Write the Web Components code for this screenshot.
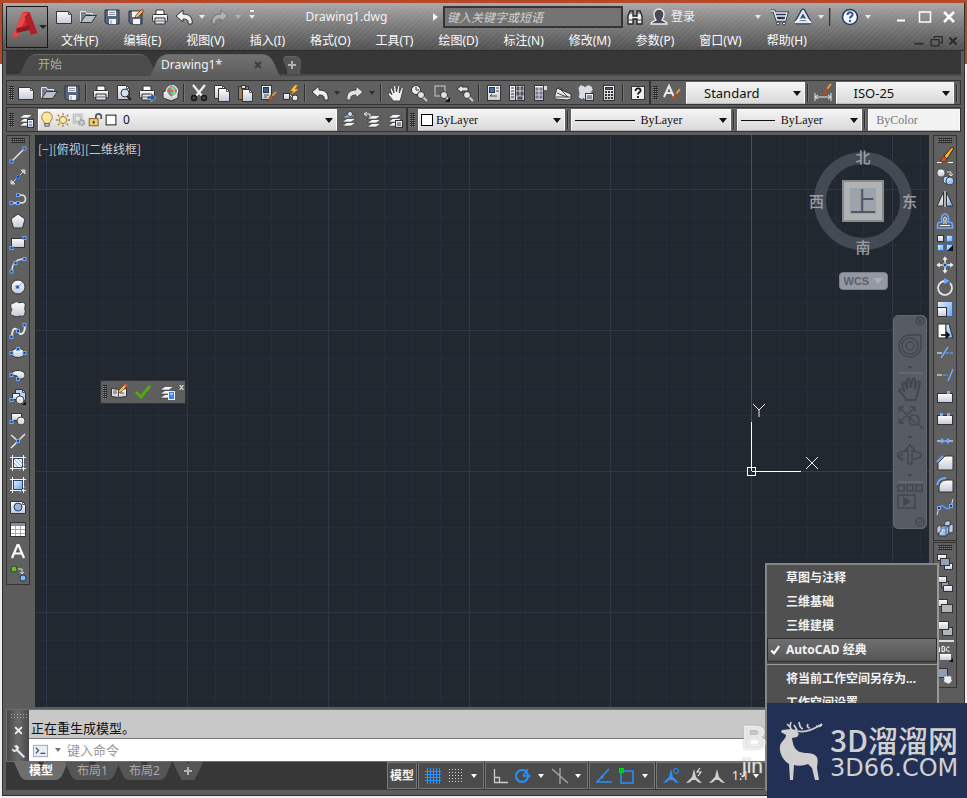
<!DOCTYPE html>
<html lang="zh-CN">
<head>
<meta charset="utf-8">
<title>Drawing1.dwg</title>
<style>
html,body{margin:0;min-height:100%}
body{background:linear-gradient(#b5482b 0 64px,#eceeee 64px);font:12px/16px "Noto Sans","Noto Sans CJK SC",sans-serif;color:#f2f2f2}
</style>
</head>
<body>
<cad-app></cad-app>
<script>
const sq=(x,y,c='#6fa8ff')=>`<rect x="${x-1.5}" y="${y-1.5}" width="3" height="3" fill="#29456f" stroke="${c}"/>`;
const page=(x,y,w,h,f='url(#g)')=>`<path d="M${x} ${y}h${w-3}l3 3v${h-3}h-${w}z" fill="${f}" stroke="#343434"/><path d="M${x+w-3} ${y}v3h3" fill="none" stroke="#555"/>`;
const box=(x,y,w,h,f='url(#g)',s='#333')=>`<rect x="${x}" y="${y}" width="${w}" height="${h}" fill="${f}" stroke="${s}"/>`;
const line=(d,c='#e4e6ea',w=1.5)=>`<path d="${d}" fill="none" stroke="${c}" stroke-width="${w}"/>`;
const sheet=(y,f='#f4f5f8')=>`<path d="M2 ${y+3}l5-3.500h9l-5 3.500z" fill="${f}" stroke="#333" stroke-width=".6"/>`;
const stack=sheet(12)+sheet(8)+sheet(4);
const brush=`<path d="M16 1l-6 6 2 2 5-7z" fill="#f2a532" stroke="#3a2a1a" stroke-width=".7"/><path d="M10 7l2 2-2 3-4 1 1-3z" fill="#a85a28" stroke="#3a2418" stroke-width=".7"/>`;
const pencil=`<path d="M8 10l1-3 6-6 2 2-6 6z" fill="#ffb54a" stroke="#55331a" stroke-width=".7"/><path d="M14 2l2 2 1.500-1.500-2-2z" fill="#e2553a"/>`;
const printer=`<path d="M5 7V2h7l1 1v4" fill="#fff" stroke="#333"/><rect x="1.500" y="6.500" width="15" height="7" rx="1" fill="url(#g)" stroke="#333"/><path d="M4 10h10v6H4z" fill="#dfe3ea" stroke="#333"/><path d="M5 13h8" stroke="#596170"/>`;
const mag=`<circle cx="11" cy="11" r="3.500" fill="#dfe4ec" stroke="#333"/><path d="M13.500 13.500l3.500 3.500" stroke="#c7ccd4" stroke-width="2"/>`;
const person=`<path d="M1 16c0-3 4-3 5-4-2-2-2-3-2-6a5 5 0 0 1 10 0c0 3 0 4-2 6 1 1 5 1 5 4z" fill="#4a4a55" stroke="#eee" stroke-width="1.300"/>`;
const ann=(c)=>`<path d="M9 2l2 8 6 6c-3 0-5-1-6-3h-4c-1 2-3 3-6 3l6-6z" fill="${c}"/>`;
const hand=`<path d="M6 17c-1-3-4-5-5-7 1-2 3-1 4 1L3 5c0-1.500 2-1.500 2.300 0L7 9 6.500 2.500c0-1.500 2-1.500 2.200 0L9.500 8l1.200-6c.3-1.300 2-1 2 .5L12.300 9l2-5c.5-1.200 2.200-.6 1.900.8L14 14l-1 3z"`;
const ICONS={
new:page(1.5,3.5,15,12),
open:`<path d="M1.500 14.500v-11h5l1 2h6v3" fill="#7a828f" stroke="#e4e7ec"/><path d="M1.500 14.500l5-7h11l-5 7z" fill="#b9c0cb" stroke="#333"/>`,
save:`<path d="M2 2h14v14H4l-2-2z" fill="#59667c" stroke="#2b3038"/><path d="M5 2.500h8V8H5zM6 11h7v5H6z" fill="#f2f4f7"/><path d="M6 4.500h6M6 6.500h6M8 12v4" stroke="#8791a1"/>`,
saveas:`<path d="M2 3h13v13H4l-2-2z" fill="#59667c" stroke="#2b3038"/><path d="M5 3.500h7V9H5zM6 11h7v5H6z" fill="#f2f4f7"/>`+pencil,
print:printer,
preview:page(2.5,1.5,12,14)+`<circle cx="10" cy="9" r="4" fill="#cfe0f2" stroke="#333"/><path d="M12 12l4 4" stroke="#222" stroke-width="2"/>`,
publish:printer+`<path d="M9 12h4V9l5 4.500-5 4.500v-3H9z" fill="#285a9c" stroke="#ddd" stroke-width=".5"/>`,
web:`<path d="M2 8l8-4 7 4v6l-7 3-8-3z" fill="url(#g)" stroke="#333"/><circle cx="11" cy="7" r="5.500" fill="#52c3d6" stroke="#fff"/><path d="M11 1.500c-4 3-4 8 0 11M6 7h10" stroke="#e65a2a" fill="none" stroke-width="1.500"/><path d="M8 3c4 0 6 4 5 8" stroke="#f5d93a" fill="none"/>`,
cut:`<path d="M3 1l9 11M15 1L6 12" stroke="#eef0f4" stroke-width="2.200"/><circle cx="4" cy="14" r="2.500" fill="#444" stroke="#17181a" stroke-width="1.500"/><circle cx="14" cy="14" r="2.500" fill="#444" stroke="#17181a" stroke-width="1.500"/>`,
copy:page(1.5,1.5,11,13)+page(5.5,4.5,11,13),
paste:box(2.5,2.500,10,13,'#a4794f')+box(5.5,1.500,4,3)+page(6.5,5.5,10,12),
match:box(2.5,1.500,10,14)+box(4.5,3.500,5,5,'#2d5ea6')+line('M5 11h5M5 13h3','#456',1)+`<path d="M17 8l-4 4" stroke="#e8a13a" stroke-width="1.500"/><path d="M12 11l3 3c-2 3-5 3-7 3 2-1 2-4 4-6z" fill="#a85a28" stroke="#5b3214" stroke-width=".5"/>`,
block:box(1.5,9.5,6,6)+`<path d="M8 11l4 4" stroke="#ddd"/><circle cx="13" cy="14" r="3" fill="url(#g)" stroke="#333"/><path d="M13 1L8 7h3l-2 4 8-6h-4l3-4z" fill="#ffc43c" stroke="#8c5a1a" stroke-width=".5"/>`,
undo:`<path d="M1 8l7-6v4c6 0 10 3 9 10h-4c1-4-1-5-5-5v3z" fill="#eef0f4" stroke="#333"/>`,
redo:`<path d="M17 8l-7-6v4C4 6 0 9 1 16h4c-1-4 1-5 5-5v3z" fill="#dfe1e5" stroke="#444"/>`,
pan:hand+` fill="#f0f2f6" stroke="#333" stroke-width=".8"/>`,
zoom:`<circle cx="6" cy="6" r="4.500" fill="#e9edf2" stroke="#333"/><path d="M6 3v3h3" stroke="#333" fill="none"/>`+mag,
zoomwin:`<rect x="2" y="2" width="10" height="10" fill="none" stroke="#ccc"/>`+mag+`<path d="M17 13v5h-5z" fill="#111"/>`,
zoomprev:`<path d="M1 5l5-4v2h6v4H6v2z" fill="#dfe3ea" stroke="#333"/>`+mag,
props:box(2.5,1.500,13,15)+box(4.500,3.500,5,5,'#3c70b5')+line('M11 4h3M11 7h3','#345',1)+line('M5 12h7M5 12l2-2','#444',1),
center:box(1.500,1.500,6,15)+box(7.500,1.500,9,15)+line('M3 4h3M3 7h3M3 10h3M3 13h3','#333',1)+[3,8].map(y=>box(9,y,2,3,'#8795ac')+box(13,y,2,3,'#8795ac')).join('')+box(10,13,4,2,'#6189bd'),
palette:box(3.500,1.500,9,15)+`<path d="M13 2h3v4h-3z" fill="#ddd"/>`+[4,8,12].map(y=>box(5,y,2,2,'#aeb7c5','#667')+box(9,y,2,2,'#aeb7c5','#667')).join(''),
sheets:`<path d="M1 11l2-7 14 6v5l-4 1-12-1z" fill="#e7eaf0" stroke="#333"/><path d="M2 13h14M3 9l10 4M7 6l7 7M5 3l9 6" stroke="#444"/>`,
markup:`<path d="M2 5c0-5 5-3 6-1 2-4 8-2 7 2l-2 4 1 3c-4 5-7 1-7 1-6 2-5-3-4-4z" fill="#d7dbe2" stroke="#e9e9e9" stroke-dasharray="2 1"/>`+box(8.500,9.500,8,7)+line('M10 12h5M10 14h5','#345',1),
calc:box(3.500,1.500,11,15)+box(5.500,3.500,7,2,'#4f6585')+[8,11,14].map(y=>line(`M5 ${y}h2M8 ${y}h2M11 ${y}h2`,'#333',2)).join(''),
help:box(2.500,2.500,13,13,'#eceef2')+`<path d="M6.500 7c0-4 6-3 5 0-.5 1.500-2.500 1.500-2.500 3.500M9 12v2" stroke="#111" stroke-width="1.800" fill="none"/>`,
textstyle:line('M1 13L6 2l5 11M3 9h6','#e6e8ed',2)+`<path d="M17 5l-4 5" stroke="#e8a13a" stroke-width="2"/><path d="M13 9l2 2c-2 5-5 5-8 5 3-2 3-5 6-7z" fill="#9a542a"/>`,
dimstyle:line('M1 9v8M17 9v8M1 13h16M4 11l-3 2 3 2M14 11l3 2-3 2','#e6e8ed',1)+`<path d="M17 0l-4 5" stroke="#e8a13a" stroke-width="2"/><path d="M13 4l2 2c-2 5-5 5-8 5 3-2 3-5 6-7z" fill="#9a542a"/>`,
layers:stack+box(10.5,8.500,6,8)+line('M12 11h3M12 14h3','#2d62b0',1),
laycur:sheet(12)+sheet(8)+sheet(4,'#82b4ef')+`<circle cx="10" cy="3" r="2.500" fill="#dfe4ec" stroke="#444"/>`,
layprev:`<g transform="translate(2 1)">${stack}</g>`+line('M1 3h6v3M4 1L1 3l3 2','#e4e6ea',1),
laystate:stack+box(9.500,9.500,7,7)+line('M11 12h4M11 14h4','#345',1),
bulb:`<path d="M6 13c0-3-3-4-3-7a6 6 0 0 1 12 0c0 3-3 4-3 7z" fill="#ffe69a" stroke="#8b7340"/><path d="M6.500 13h5v3h-5z" fill="#c3c9d3" stroke="#555"/>`,
sun:`<circle cx="9" cy="9" r="4" fill="#ffe9a6" stroke="#83703c"/><path d="M9 1v3M9 14v3M1 9h3M14 9h3M3 3l2 2M13 13l2 2M15 3l-2 2M3 15l2-2" stroke="#b18c37" stroke-width="1.500"/>`,
freeze:`<path d="M2.500 2.500h10v8l-2 2h-8zM4.500 4.500h6v6h-6z" fill="none" stroke="#aaa"/><circle cx="12" cy="12" r="3" fill="#ccc" stroke="#999" stroke-width="2" stroke-dasharray="2 1"/>`,
lock:`<path d="M10 8V5c0-4 6-4 6 0v3" fill="none" stroke="#555" stroke-width="2"/>`+box(2.500,7.500,10,8,'#f4ce70','#6d5828')+`<path d="M7.500 10v3" stroke="#333" stroke-width="2"/>`,
swatch:box(3.500,3.500,11,11,'#fff','#000'),
line:line('M3 15L16 2')+sq(2.500,15.500)+sq(15.500,2.500),
xline:`<path d="M3 15L15 3M2 16v-4l4 4zM16 2v4l-4-4z" fill="#ccc" stroke="#ccc"/>`+sq(9,9,'#347be8'),
pline:line('M3 13h9c6 0 6-8 0-8H9')+sq(2.500,13)+sq(9,13)+sq(9,5),
poly:`<path d="M9 2l7 5-2.500 9h-9L2 7z" fill="url(#g)" stroke="#333"/>`,
rect:box(2.500,4.500,13,9)+sq(2.500,14)+sq(15.500,4),
arc:line('M3 15c0-8 5-12 12-12')+sq(2.500,15.500)+sq(6.500,7)+sq(15.500,3),
circle:`<circle cx="9" cy="9" r="7" fill="url(#g)" stroke="#333"/>`+line('M9 9l4-4','#6fa8ff',1)+sq(8.500,9),
cloud:`<path d="M5 3c2-2 4-1 5 0 5-2 7 1 6 4-1 2 1 4 0 6 0 3-3 4-5 3-3 1-5 1-6 0-4 0-4-4-2-6-2-4-2-7 2-7z" fill="url(#g)" stroke="#333"/>`,
spline:line('M3 15C3 2 9 8 9 9c2 5 7 4 7-6','#e4e6ea',2)+sq(2.500,15)+sq(9,9)+sq(15.500,3),
ellipse:`<ellipse cx="9" cy="9" rx="7" ry="4.500" fill="url(#g)" stroke="#333"/>`+sq(2.500,9)+sq(15.500,9)+sq(9,5),
earc:`<path d="M2 9c0-6 14-6 14 0 0 5-6 4-7 4l-1-3z" fill="url(#g)" stroke="#333"/>`+sq(2.500,9)+sq(9,13),
insert:page(6.5,1.5,10,11,'#b9d1f2')+box(3.500,5.500,7,6)+`<circle cx="11" cy="12" r="4" fill="url(#g)" stroke="#444"/>`+sq(2.500,12)+`<path d="M17 13v4h-4z" fill="#111"/>`,
mkblock:box(2.500,3.500,10,7)+`<circle cx="12" cy="11" r="4" fill="url(#g)" stroke="#444"/>`+sq(2.500,12),
point:line('M2 16L16 2M2 3l7 6')+sq(9,9),
hatch:box(4.500,4.500,9,9,'#eaf2ff','#24456f')+line('M5 5l8 8M5 9l4 4M9 5l4 4','#7fb0f4',1)+line('M1 3.500h16M1 14.500h16M3.500 1v16M14.500 1v16','#f1f3f6',1)+line('M10 17l7-7','#5c97f0',1),
gradient:box(4.500,4.500,9,9,'url(#b)','#24456f')+line('M1 3.500h16M1 14.500h16M3.500 1v16M14.500 1v16','#f1f3f6',1)+line('M10 17l7-7','#5c97f0',1),
region:page(1.5,3.5,15,12)+`<circle cx="9" cy="9" r="4" fill="#98b6df" stroke="#24395e"/>`,
table:box(1.500,2.500,15,14,'#fff')+`<path d="M2 3h14v3H2z" fill="#7e8ca4"/>`+line('M2 9.500h14M2 13.500h14M6.500 6v10M11.500 6v10','#a4a9b1',1),
text:line('M3 16L8.500 3h1L15 16M5 11.500h8','#fff',2.200),
group:`<circle cx="5" cy="5" r="3" fill="#6db844" stroke="#27501a"/><circle cx="14" cy="14" r="3" fill="#83baf3" stroke="#1c3c66"/>`+line('M9 5h4v5M11 8l2 2 2-2','#ddd',1),
erase:line('M1 16.500h5M12 16.500h5','#fff',1)+`<path d="M16 1l-8 9 3 3 7-11z" fill="#f6b43a" stroke="#35240f"/><path d="M8 10l3 3c-1 3-4 3-6 3 0-2 0-4 3-6z" fill="#e04b24" stroke="#35240f" stroke-width=".7"/>`,
cocopy:`<circle cx="5" cy="5" r="4" fill="url(#g)" stroke="#444" stroke-width=".7"/>`+line('M11 4h4v4M13 6l2 2 2-2','#ddd',1)+`<circle cx="11" cy="12" r="4" fill="url(#b)" stroke="#345"/><circle cx="14" cy="13" r="4" fill="url(#b)" stroke="#345"/>`,
mirror:`<path d="M7.500 2v14H1z" fill="url(#g)" stroke="#333"/><path d="M10.500 2v14H17z" fill="url(#b)" stroke="#333"/>`+line('M9 1v16','#fff',1),
offset:line('M1.500 16h15v-3c0-2-2-3-4.500-3 3-11-9-11-6 0-2.500 0-4.500 1-4.500 3z','#6fa8ff',1.600)+line('M4 13.500h10M7.500 12c2-2-1.500-6 1.500-7 3 1-.5 5 1.500 7','#fff',1),
array:box(1.500,1.500,6,6)+[[10.5,1.5],[1.5,10.5],[10.5,10.5]].map(a=>box(...a,6,6,'url(#b)','#3c74bd')).join('')+`<path d="M17 11v6h-6z" fill="#111"/>`,
move:`<path d="M9 0l3 4h-2v3H8V4H6zM9 18l3-4h-2v-3H8v3H6zM0 9l4-3v2h3v2H4v2zM18 9l-4-3v2h-3v2h3v2z" fill="#f0f1f4" stroke="#444" stroke-width=".4"/>`+sq(9,9),
rotate:line('M8 3a7 7 0 1 0 6 2','#e4e6ea',1.8)+`<path d="M8 0l6 3-6 3z" fill="#6fa8ff"/>`,
scale:box(1.500,1.500,15,15,'url(#b)','#3c6194')+box(1.500,7.500,9,9),
stretch:`<path d="M2 2h8v14H2z" fill="#fff" stroke="#333"/><path d="M10 2h3l4 14h-7z" fill="url(#b)" stroke="#333"/>`+line('M5 13h8M10 10l3 3-3 3','#000',1.5),
trim:line('M1 9h5','#fff',1)+line('M5 14L12 3','#6fa8ff',1.500)+line('M10 9h7','#6fa8ff" stroke-dasharray="3 1',1),
extend:line('M1 9h5','#fff',1)+line('M12 15L17 3','#6fa8ff',1.500)+line('M7 9h5','#6fa8ff" stroke-dasharray="3 1',1),
break1:box(1.500,5.500,15,9)+box(11.500,3.500,2,2,'#6fa8ff','#6fa8ff'),
break2:box(1.500,5.500,15,9)+box(4.500,3.500,2,2,'#6fa8ff','#6fa8ff')+box(11.500,3.500,2,2,'#6fa8ff','#6fa8ff'),
join:line('M1 9h5M12 9h5','#fff',1)+`<path d="M5 6l4 2.500L13 6v6L9 9.500 5 12z" fill="#6fa8ff"/>`,
chamfer:`<path d="M9 2h8v14H2V9z" fill="url(#g)" stroke="#333"/>`+line('M1 8l6-6','#6fa8ff',2),
fillet:`<path d="M11 4h6v12H3v-4c0-5 3-8 8-8z" fill="url(#g)" stroke="#333"/>`+line('M1 9c1-5 4-7 9-7','#6fa8ff',2),
blend:line('M1 17L3 9M15 9l2-8','#ddd',1)+line('M3 10C7 3 11 16 15 8','#5a9bfa',1.500)+sq(3,10)+sq(15,8),
explode:`<path d="M3 8l3-2h7v7l-3 3H3z" fill="url(#b)" stroke="#333"/><path d="M3 8h7v8M10 8l3-2" fill="none" stroke="#48628a"/><path d="M8 5l2-4h4v5zM1 7l4-2v6l-4 3zM13 5l4-1v8l-4 1z" fill="#b9d0ef" stroke="#333" stroke-width=".7"/>`,
front:box(1.500,1.500,9,6)+box(8.500,10.500,8,6)+box(4.500,5.500,9,7,'#93a0b7'),
back:box(5.500,6.500,7,6,'#93a0b7')+box(1.500,1.500,9,6)+box(7.500,10.500,9,6),
above:box(1.500,2.500,10,7)+box(5.500,7.500,11,8,'#aeb4ba'),
below:box(6.500,8.500,10,8,'#aeb4ba')+box(1.500,2.500,11,8),
anno:line('M0.500 7V3q2-3 3 0v4M0.500 5h3M6 1.500v5q5 0 2-2.500 2-3-2-2.500M13.500 2q-4 0-3 3 1 2 3 1','#fff',1)+`<path d="M4 9h11v6H4z" fill="url(#g)"/><path d="M17 13v4h-4z" fill="#111"/>`,
hback:box(1.500,1.500,10,9,'#8f9db5')+`<path d="M8 9h7l1 5-3 3-5-2z" fill="#eee" stroke="#779" stroke-dasharray="2 1"/>`,
binoc:`<path d="M2 16V8l2-5h3v5h4V3h3l2 5v8h-5v-5H7v5z" fill="#f0f1f5" stroke="#262626" stroke-width="1.400"/><path d="M3 12h4M11 12h4M4 5h3M11 5h3" stroke="#444"/>`,
user:person,
cart:`<path d="M1 3h3l3 9h8l2-7H5M5 8h11M9 6v6M12 6v6" fill="none" stroke="#25314c" stroke-width="3"/><path d="M1 3h3l3 9h8l2-7H5M5 8h11" fill="none" stroke="#edf0f6" stroke-width="1.300"/><circle cx="8" cy="15.500" r="1.500" fill="#eee" stroke="#333"/><circle cx="14" cy="15.500" r="1.500" fill="#eee" stroke="#333"/>`,
a360:`<path d="M9 3L3 14h12z" fill="none" stroke="#2b3e61" stroke-width="5" stroke-linejoin="round"/><path d="M9 3L3 14h12z" fill="none" stroke="#dfe5ef" stroke-width="2.500" stroke-linejoin="round"/><path d="M1 15c3-5 13-5 16 0" fill="none" stroke="#fff" stroke-width="1.500"/>`,
qhelp:`<circle cx="9" cy="9" r="7.500" fill="#f2f5fa" stroke="#26395c" stroke-width="1.500"/><path d="M6.500 7c0-4 6-3 5 0-.5 1.500-2.500 1.500-2.500 3.500M9 12v2" stroke="#2d5296" stroke-width="2" fill="none"/>`,
min:line('M5 12.500h8','#fff',2),
max:line('M3.500 4h11v10h-11z','#fff',1.500),
close:line('M4 4l10 10M14 4L4 14','#fff',2.500),
dmin:line('M4 12h10','#2b2b2b',2),
drestore:line('M7 6V4h9v7h-2M3.500 7.500h9v7h-9z','#2b2b2b',1.500),
dclose:line('M5 5l8 8M13 5l-8 8','#2b2b2b',2.500),
tabclose:line('M6 6l6 6M12 6l-6 6','#3c3c3c',2),
plus:line('M9 5v8M5 9h8','#b4b4b4',2),
wclose:line('M5 5l8 8M13 5l-8 8','#f4f4f4',2.200),
wrench:`<path d="M3 2l3 3-1 2-3-1-1-2v4l3 2 3-1 8 8 2-2-8-8 1-3-3-3z" fill="#e9ebef" stroke="#555" stroke-width=".5"/>`,
prompt:box(1.500,3.500,15,12,'#e9edf5','#9aa4b4')+line('M4 6l3 3-3 3M9 12h5','#394b69',1.300),
tick:line('M2 9l5 5 9-11','#51a813',3),
refedit:`<path d="M1.500 5.500l7 1 8-1v8l-8 1-7-1z" fill="url(#g)" stroke="#333"/><path d="M8.500 6v9M3 8h4M3 10h4M10 10h4" stroke="#555"/>`+pencil,
refsave:stack+box(10.500,8.500,6,8,'#3f82e6','#e6eefc')+line('M12 11h3','#fff',1),
check:line('M3 9l4 4 7-10','#fff',3),
grid:line('M1 4.500h16M1 7.500h16M1 10.500h16M1 13.500h16M3.500 1v16M6.500 1v16M9.500 1v16M12.500 1v16M15.500 1v16','#2a91ff',1),
snap:[2,5,8,11,14].map(y=>line(`M2 ${y+.5}h14`,'#d5d5d5" stroke-dasharray="1 2',1)).join(''),
ortho:line('M3.500 2v13.500H17M3.500 10.500h5v5','#c9c9c9',1.300),
polar:line('M9 9h8M9 9l5-7','#2a91ff',1.300)+`<circle cx="8" cy="9" r="6" fill="none" stroke="#2a91ff" stroke-width="2"/>`,
iso:line('M1 2l16 14M9 1v16','#a9a9a9',1.300),
otrack:line('M1 15h16M2 15L14 2','#2a91ff',1.500)+`<circle cx="7" cy="10" r="1.500" fill="#2a91ff"/>`,
osnap:line('M3 4h12v12H3z','#2a91ff',1.500)+box(1.500,1.500,4,4,'#0b3','#0d0'),
ann1:ann('#2a91ff')+`<circle cx="14" cy="4" r="2.500" fill="none" stroke="#2a91ff"/>`,
ann2:ann('#cfcfcf')+line('M15 1l-3 4h4l-3 4','#e5e5e5',1.200),
ann3:ann('#cfcfcf'),
logo:`<path d="M1 17L8 1h4l5 13-4 1-1-4-5 1-2 4z" fill="#c62b2f"/><path d="M8 1l3 1-4 9-2 5-4 1z" fill="#e9494a"/><path d="M12 1l5 13-4 1L9 4z" fill="#b31f28"/><path d="M4 11l8-2 1 3-9 2z" fill="#8f1a20"/>`,
};
function define(name,html,after){
 const t=document.createElement('template');
 t.innerHTML='<style>*{box-sizing:border-box}button,select,input{font:inherit;color:inherit}</style>'+html;
 customElements.define(name,class extends HTMLElement{
  constructor(){super();this.attachShadow({mode:'open'})}
  connectedCallback(){if(this.ready)return;this.ready=true;this.shadowRoot.append(t.content.cloneNode(true));if(after)after(this,this.shadowRoot)}
 });
}
const btns=(s,w='')=>s.split(' ').map(n=>n==='|'?'<cad-sep></cad-sep>':n==='v'?'<cad-arrow></cad-arrow>':`<cad-button icon="${n}" ${w}></cad-button>`).join('');

define('cad-icon',`<style>:host{display:block;width:18px;height:18px;flex:none}svg{display:block;width:100%;height:100%;overflow:visible}</style>`,(h,r)=>{
 const s=document.createElement('div');s.style.cssText='width:100%;height:100%';
 s.innerHTML=`<svg viewBox="0 0 18 18" aria-hidden="true"><defs><linearGradient id="g" x2="0" y2="1"><stop stop-color="#fdfdfe"/><stop offset="1" stop-color="#c4cad6"/></linearGradient><linearGradient id="b" x2="1" y2="1"><stop stop-color="#e3effd"/><stop offset="1" stop-color="#6fa3e8"/></linearGradient></defs>${ICONS[h.getAttribute('name')]||''}</svg>`;
 r.append(s);
});
define('cad-button',`<style>:host{display:block;flex:none;width:23px;height:22px}button{width:100%;height:100%;padding:0;border:0;background:none;display:grid;place-items:center}cad-icon{width:var(--icon,18px);height:var(--icon,18px)}</style><button><cad-icon></cad-icon></button>`,(h,r)=>{
 const i=r.querySelector('cad-icon');const n=h.getAttribute('icon');i.setAttribute('name',n);r.querySelector('button').setAttribute('aria-label',n);
 const c=i.cloneNode();i.replaceWith(c);
});
define('cad-arrow',`<style>:host{display:block;flex:none;width:12px}button{width:100%;height:100%;padding:0;border:0;background:none;display:grid;place-items:center}i{border:3px solid transparent;border-top:4px solid var(--arrow,#e8e8e8);border-bottom:0}:host([bar]) i{box-shadow:0 -6px 0 -1px #e8e8e8}</style><button aria-label="more"><i></i></button>`);
define('cad-sep',`<style>:host{display:block;flex:none;width:6px;height:18px;border:solid transparent;border-width:0 2px 0 2px;background:linear-gradient(90deg,#303030 50%,#747474 50%) padding-box}</style>`);
define('cad-grip',`<style>:host{display:block;flex:none;width:5px;height:14px;background:repeating-linear-gradient(#252525 0 1px,transparent 1px 2px),repeating-linear-gradient(90deg,#8a8a8a 0 1px,#4a4a4a 1px 2px)}:host([flat]){width:14px;height:5px}</style>`);
define('cad-combo',`<style>
:host{display:block;position:relative;min-width:0;height:22px;color:#111}
select{width:100%;height:22px;appearance:none;border:1px solid #fafafa;border-bottom-color:#bbb;border-radius:1px;background:linear-gradient(#f4f4f4,#d9d9d9);padding:0 20px 0 var(--pad,16px);line-height:18px}
i{position:absolute;right:4px;top:9px;border:4px solid transparent;border-top:5px solid #111;border-bottom:0;pointer-events:none}
div{position:absolute;left:0;top:2px;display:flex;pointer-events:none;align-items:center;height:18px}
:host([disabled]) select{background:#f2f2f2;color:#777;opacity:1}:host([disabled]) i{display:none}
</style><select><option></option></select><i></i><div><slot></slot></div>`,(h,r)=>{
 r.querySelector('option').textContent=h.getAttribute('value');const s=r.querySelector('select');s.setAttribute('aria-label',h.getAttribute('label'));s.disabled=h.hasAttribute('disabled');
});
define('cad-titlebar',`<style>
:host{display:grid;grid-template-columns:42px 1fr;height:48px;flex:none;padding:3px 3px 0;background:repeating-linear-gradient(135deg,rgba(255,255,255,.04) 0 2px,transparent 2px 4px),linear-gradient(#a9a9a9,#828282 40%,#505050);border-bottom:1px solid #2c2c2c}
.app{width:42px;height:42px;padding:0;border:1px solid #161616;background:linear-gradient(#999,#5b5b5b);display:flex;align-items:center}
.app cad-icon{width:29px;height:30px;margin:-4px 0 0 3px}.app i{border:4px solid transparent;border-top:4px solid #252525;border-bottom:0}
.top,.menu{display:flex;align-items:center;min-width:0}
.col{min-width:0}
.top{height:22px;padding-left:4px;white-space:nowrap}
.top cad-button{width:24px}.top cad-arrow{height:20px}
h1{flex:1;margin:0;font-size:12px;font-weight:400;text-align:center}
input{width:180px;height:22px;border:2px solid #343434;background:#747474;padding:0 2px;font-style:italic;color:#ddd;outline:0}
input::placeholder{color:#d2d2d2}
.tri{border:4px solid transparent;border-left:5px solid #f2f2f2;border-right:0;margin-right:5px}
.login{margin-right:57px;color:#f2f2f2;text-decoration:none}
.menu{height:22px;margin-top:2px;padding-left:13px;gap:25px}
.menu a{color:#fafafa;text-decoration:none;white-space:nowrap}
.doc{display:flex;margin-left:auto}.doc cad-button{width:17px;--icon:16px}
.win{display:flex;margin-left:15px}.off{opacity:.4}.gap{width:5px}.gap0{width:3px}
</style>
<button class="app" aria-label="menu"><cad-icon name="logo"></cad-icon><i></i></button>
<div class="col"><div class="top">${btns('new open save saveas print undo v')}<cad-button class="off" icon="redo"></cad-button><cad-arrow class="off"></cad-arrow><cad-arrow bar style="width:16px"></cad-arrow><h1>Drawing1.dwg</h1><span class="tri"></span><input aria-label="search" placeholder="键入关键字或短语">${btns('binoc user')}<a class="login" href="#">登录</a>${btns('v')}<span class="gap0"></span>${btns('cart a360 v')}<cad-sep></cad-sep><span class="gap"></span>${btns('qhelp v')}<div class="win">${btns('min max close')}</div></div>
<nav class="menu">${['文件(F)','编辑(E)','视图(V)','插入(I)','格式(O)','工具(T)','绘图(D)','标注(N)','修改(M)','参数(P)','窗口(W)','帮助(H)'].map(t=>`<a href="#">${t}</a>`).join('')}<div class="doc">${btns('dmin drestore dclose')}</div></nav></div>`);
define('cad-filetabs',`<style>
:host{display:flex;flex:none;height:25px;margin:0 3px;padding:3px 0 0 14px;background:#373737;border-bottom:2px solid #4a4a4a}
button{position:relative;isolation:isolate;border:0;background:none;height:22px;width:132px;padding:0 8px 0 18px;text-align:left;display:flex;align-items:center;justify-content:space-between;color:#aaa;font-size:12px}
button::before,button::after{content:"";position:absolute;z-index:-1;inset:0 40% 0 4px;background:var(--bg,#4b4b4b);border-top:1px solid #666;border-radius:8px 0 0 0;transform:skewX(-24deg)}
button::after{inset:0 0 0 40%;border-radius:0 8px 0 0;transform:skewX(24deg)}
.on{--bg:linear-gradient(#727272,#5d5d5d);color:#f1f1f1;width:124px;padding-left:10px;margin-left:-1px}
.add{width:22px;padding:0;margin:2px 0 0 6px;height:18px}.add cad-icon{margin:auto}.add::before{inset:0 6px 0 4px;background:#555;transform:skewX(24deg);border-radius:6px 0 0 6px}.add::after{inset:0 2px 0 6px;background:#555;border-radius:0 6px 6px 0;transform:none}
</style><button>开始</button><button class="on">Drawing1*<cad-icon name="tabclose"></cad-icon></button><button class="add" aria-label="new tab"><cad-icon name="plus"></cad-icon></button>`);
define('cad-toolbar',`<style>:host{display:flex;align-items:center;flex:none;height:25px;min-width:0;border:1px solid #333;background:#606060;padding-left:2px}:host([vertical]){flex-direction:column;width:24px;height:auto;padding:1px 0 0}</style><slot></slot>`);
define('cad-bars',`<style>
:host{display:flex;flex-direction:column;gap:2px;flex:none;padding:4px 3px 3px}
.row{display:flex;overflow:hidden}.grow{flex:1}cad-toolbar>cad-combo{flex:1}
.f{font-size:13px}.by{font-family:"Liberation Serif","Noto Sans CJK SC",serif}
cad-arrow{--arrow:#303030;height:18px}svg{display:block}
.m cad-icon{width:16px;height:16px}
</style>
<div class="row"><cad-toolbar><cad-grip></cad-grip>${btns('new open save | print preview publish web | cut copy paste match block | undo v redo v | pan zoom zoomwin zoomprev | props center palette sheets markup calc | help')}</cad-toolbar>
<cad-toolbar class="grow"><cad-grip></cad-grip><cad-button icon="textstyle" style="width:28px"></cad-button><cad-combo class="f" style="--pad:17px" label="text style" value="Standard"></cad-combo><cad-sep></cad-sep><cad-button icon="dimstyle" style="width:25px"></cad-button><cad-combo class="f" style="--pad:17px" label="dimension style" value="ISO-25"></cad-combo><cad-sep></cad-sep></cad-toolbar></div>
<div class="row"><cad-toolbar style="width:401px"><cad-grip></cad-grip><cad-button icon="layers" style="width:24px"></cad-button><cad-combo class="m" style="--pad:84px" label="layer" value="0"><cad-icon style="margin-left:1px" name="bulb"></cad-icon><cad-icon name="sun"></cad-icon><cad-icon name="freeze"></cad-icon><cad-icon name="lock"></cad-icon><cad-icon name="swatch"></cad-icon></cad-combo>${btns('laycur layprev laystate')}</cad-toolbar>
<cad-toolbar class="grow"><cad-grip></cad-grip><cad-combo class="by" style="flex:148;margin-left:3px;--pad:17px" label="color" value="ByLayer"><cad-icon name="swatch"></cad-icon></cad-combo><cad-sep></cad-sep><cad-combo class="by" style="flex:160;--pad:68px" label="linetype" value="ByLayer"><svg width="64" height="18"><path d="M4 9.500h60" stroke="#111"/></svg></cad-combo><cad-sep></cad-sep><cad-combo class="by" style="flex:126;--pad:43px" label="lineweight" value="ByLayer"><svg width="40" height="18"><path d="M4 9.500h34" stroke="#111"/></svg></cad-combo><cad-sep></cad-sep><cad-combo disabled class="by" style="flex:92;--pad:7px" label="plot style" value="ByColor"></cad-combo></cad-toolbar></div>`);
define('cad-viewcube',`<style>:host{display:grid;justify-items:center;width:110px;font:15px/18px "Noto Sans CJK SC",sans-serif}
.ring{position:relative;display:grid;place-items:center;width:98px;height:98px;border:12px solid #444a53;border-radius:50%}
.face{width:42px;height:42px;border:2px solid #858a8f;background:linear-gradient(#9da3aa,#9da3aa) center/26px 26px no-repeat #b0b2b4;display:grid;place-items:center;color:#4e5a6b;font-size:27px;line-height:30px;padding:0}
b{position:absolute;font-weight:500;color:#9b9fa4}.n{top:-16px}.so{bottom:-18px}.w{left:-17px}.e{right:-17px}
.wcs{margin-top:22px;height:18px;width:49px;display:flex;align-items:center;justify-content:space-between;padding:0 4px;border:1px solid #7b7f8c;border-radius:4px;background:#9498a3;color:#5c6270;font:bold 11px/14px "Liberation Sans",sans-serif}
i{border:5px solid transparent;border-top:6px solid #a9adb6;border-bottom:0}
</style><div class="ring"><b class="n">北</b><b class="w">西</b><button class="face">上</button><b class="e">东</b><b class="so">南</b></div><button class="wcs">WCS<i></i></button>`);
define('cad-navbar',`<style>:host{display:block;width:34px;height:214px;border-radius:5px;background:#575c63;border:1px solid #646970}svg{display:block}</style>
<svg width="32" height="212" fill="none" stroke="#42474e" stroke-width="1.500"><circle cx="26" cy="5" r="4"/><path d="M24 3l4 4M28 3l-4 4M5 30a11 11 0 0 1 11-11h11v11a11 11 0 0 1-22 0z"/><circle cx="16" cy="30" r="8"/><circle cx="16" cy="30" r="4"/><path d="M4 57h25M4 166h25" stroke="#6a6e73"/><path d="M13 50h6l-3 3zM13 120h6l-3 3zM13 158h6l-3 3z" fill="#42474e" stroke="none"/><g transform="translate(4 61) scale(1.350)">${hand}/></g><path d="M5 91l16 16M5 91v5M5 91h5M21 91L5 107M21 91h-5M21 91v5M5 107h5M5 107v-5"/><circle cx="20" cy="104" r="5"/><path d="M24 108l5 5M16 129l-5 6h3v13h4v-13h3z"/><path d="M12 135c-11 1-11 7-3 8M20 135c11 2 9 8-2 8M9 138l-5 3 5 4"/><path d="M4 169h6v6H4zM13 169h6v6h-6zM22 169h6v6h-6zM4 179h17v13H4z"/><path d="M10 182v7l6-3.500z" fill="#42474e"/><circle cx="26" cy="206" r="4"/><path d="M24 206h4"/></svg>`);
define('cad-canvas',`<style>
:host{display:block;position:relative;flex:1;min-width:0;overflow:hidden;background:#212830}
.g{position:absolute;inset:0;width:100%;height:100%}
.lab{position:absolute;left:3px;top:5px;color:#c9cbcd;font:12px/18px "Noto Sans CJK SC",sans-serif}
cad-viewcube{position:absolute;right:11px;top:17px}cad-navbar{position:absolute;right:2px;top:180px}
.float{position:absolute;left:65px;top:245px;display:flex;align-items:center;width:86px;height:24px;border:1px solid #30343a;background:#5e5e5e;padding-left:2px}
.float cad-button{width:24px}.float cad-grip{width:4px}.float i{align-self:start;font:bold 9px/12px "Liberation Sans",sans-serif;color:#ddd}
</style><svg class="g" shape-rendering="crispEdges" fill="none"><defs><pattern id="p" x="11" y="54" width="141" height="141" patternUnits="userSpaceOnUse"><path d="M28.500 0v141M56.500 0v141M84.500 0v141M112.500 0v141M0 28.500h141M0 56.500h141M0 85.500h141M0 113.500h141" stroke="#272d38"/><path d="M.5 0v141M0 .5h141" stroke="#303749"/></pattern></defs><rect width="100%" height="100%" fill="url(#p)"/><path d="M716.500 0v287" stroke="#207324"/><path d="M766 336.500h2000" stroke="#662a31"/><path d="M716.500 287v49M717 336.500h49M712.500 332.500h8v8h-8z" stroke="#fff"/><path d="M718 269l6 6v7M730 269l-6 6M771 322l12 12M783 322l-12 12" stroke="#eee" shape-rendering="auto"/></svg>
<span class="lab">[−][俯视][二维线框]</span><cad-viewcube></cad-viewcube><cad-navbar></cad-navbar>
<div class="float"><cad-grip></cad-grip>${btns('refedit tick refsave')}<i>x</i></div>`);
define('cad-work',`<style>:host{display:flex;flex:1;min-height:560px;padding:0 3px}.l{width:29px;flex:none}.r{width:32px;flex:none;padding-left:4px;display:flex;flex-direction:column;gap:1px}.hr{width:18px;height:2px;background:#ddd;margin:1px 0}cad-button{width:22px}cad-grip{margin:1px 0}</style>
<div class="l"><cad-toolbar vertical><cad-grip flat></cad-grip>${btns('line xline pline poly rect arc circle cloud spline ellipse earc insert mkblock point hatch gradient region table text group')}</cad-toolbar></div>
<cad-canvas></cad-canvas>
<div class="r"><cad-toolbar vertical><cad-grip flat></cad-grip>${btns('erase cocopy mirror offset array move rotate scale stretch trim extend break1 break2 join chamfer fillet blend explode')}</cad-toolbar><cad-toolbar vertical><cad-grip flat></cad-grip>${btns('front back above below')}<span class="hr"></span>${btns('anno hback')}</cad-toolbar></div>`);
define('cad-command',`<style>:host{display:flex;flex:none;margin:2px 3px 0;height:53px;border:1px solid #6f6f6f}
.side{width:22px;background:linear-gradient(90deg,#484848,#6a6a6a 50%,#484848);display:flex;flex-direction:column;align-items:center;justify-content:space-between;padding-top:3px}
.dots{width:17px;height:6px;background:radial-gradient(#aaa 1px,transparent 1px) 0 0/3px 3px}.side cad-button{height:20px;--icon:15px}
.main{flex:1;min-width:0;display:flex;flex-direction:column;background:#fff;font-size:13px;color:#111}
.hist{height:29px;background:#c8c8c8;border-bottom:1px solid #777;padding:9px 2px 0;line-height:18px}
.in{display:flex;flex:1;align-items:center;--arrow:#777}.in cad-arrow{height:18px}.in cad-button{--icon:17px}input{flex:1;border:0;outline:0;padding:0 3px;min-width:0}input::placeholder{color:#999}</style>
<div class="side"><span class="dots"></span>${btns('wclose wrench')}</div><div class="main"><div class="hist">正在重生成模型。</div><div class="in">${btns('prompt v')}<input aria-label="command" placeholder="键入命令"></div></div>`);
define('cad-status',`<style>:host{display:flex;flex:none;height:28px;margin:0 3px 5px;background:#373737}
.tabs{display:flex;flex:1;padding-left:12px}
.tabs button{position:relative;isolation:isolate;height:18px;width:46px;padding:0;margin-right:5px;border:0;background:none;color:#aaa;line-height:18px}
.tabs button::before,.tabs button::after{content:"";position:absolute;z-index:-1;inset:0 48% 0 0;background:#555;border-radius:0 0 0 5px;transform:skewX(24deg)}
.tabs button::after{inset:0 0 0 48%;border-radius:0 0 5px 0;transform:skewX(-24deg)}
.tabs .on{color:#fff;font-weight:bold}.tabs .on::before,.tabs .on::after{background:#6e6e6e}.tabs .w{width:47px}
.tabs .add{width:22px;margin-left:4px}.add cad-icon{margin:auto}.tabs .add::before{inset:0 8px 0 0}.tabs .add::after{inset:0 0 0 8px}
.bar{display:flex;width:574px;flex:none}
.bar div{display:flex;align-items:center;height:27px;border:1px solid #777;background:#4b4b4b;padding:0 2px;margin-right:1px}
.bar .t{padding:0;font-weight:bold}.t button{border:0;background:none;padding:0 2px}.bar cad-arrow{width:14px;height:18px;--arrow:#fff}.bar cad-button{--icon:18px}.bar span{margin-left:4px}</style>
<div class="tabs"><button class="on">模型</button><button class="w">布局1</button><button class="w">布局2</button><button class="add" aria-label="new layout"><cad-icon name="plus"></cad-icon></button></div>
<div class="bar"><div class="t"><button>模型</button></div><div>${btns('grid snap v')}</div><div>${btns('ortho polar v iso v')}</div><div>${btns('otrack osnap v')}</div><div style="flex:1">${btns('ann1 ann2 ann3')}<span>1:1</span>${btns('v')}</div></div>`);
define('cad-menu',`<style>:host{display:flex;flex-direction:column;width:174px;height:228px;border:2px solid #858585;border-right-color:#999;background:#505050;font-weight:bold;padding-top:1px}
button{flex:none;display:flex;align-items:center;height:24px;border:1px solid transparent;background:none;padding:0 0 0 18px;text-align:left;white-space:nowrap;font-weight:bold}
.on{padding-left:1px;border-color:#2d2d2d;background:linear-gradient(#707070,#555)}.on cad-icon{width:13px;height:13px;margin-right:4px}
hr{width:100%;border:0;border-top:1px solid #999;margin:2px 0}</style>
<button>草图与注释</button><button>三维基础</button><button>三维建模</button><button class="on"><cad-icon name="check"></cad-icon>AutoCAD 经典</button><hr><button>将当前工作空间另存为...</button><button>工作空间设置...</button>`);
define('cad-banner',`<style>:host{display:flex;align-items:center;gap:5px;width:200px;height:95px;background:#233056;color:#d0d0d0;padding:0 0 0 12px;white-space:nowrap}
strong,span{display:block}strong{font:500 30px/34px "Noto Sans CJK SC",sans-serif}span{font:24px/24px "DejaVu Sans",sans-serif}svg{flex:none;display:block}</style>
<svg width="46" height="60" viewBox="0 0 46 60" fill="#cfcfcf"><path d="M3 9l9-1 5 1 3 4-2 3-5 1c1 8 3 12 8 14 7 2 12 0 16 4 3 3 1 9 1 12l2 12h-4l-3-12-4-4c-5 2-10 2-14 1l-1 15h-3l-1-16c-6-4-10-11-9-18C2 20 7 18 7 14l-5-3z"/><path d="M16 9c7 4 16 1 27-6M24 8c-4-1-3-4-4-7M31 7c-3 0-3-2-2-4M37 5c3 1 5 0 6-2M13 9c-3-2-2-5-1-8M11 6L8 3M18 9l-3-5" fill="none" stroke="#cfcfcf" stroke-width="1.700"/></svg><div><strong>3D溜溜网</strong><span>3D66.COM</span></div>`);
define('cad-watermark',`<style>:host{display:block;color:rgba(255,255,255,.8);width:25px;text-shadow:0 0 2px #888;white-space:nowrap}b,span{display:block}b{font:bold 34px/34px "Liberation Sans",sans-serif;-webkit-text-stroke:1px rgba(255,255,255,.6)}span{font:21px/24px "Liberation Sans",sans-serif}</style><b>B</b><span>jin</span>`);
define('cad-app',`<style>:host{box-sizing:border-box;display:flex;flex-direction:column;position:relative;min-height:100vh;padding:3px 2px 2px}
.win{flex:1;display:flex;flex-direction:column;background:#5c5c5c;border:solid #303030;border-width:0 1px 1px}
cad-menu{position:absolute;right:28px;bottom:7px}cad-watermark{position:absolute;right:200px;bottom:20px}cad-banner{position:absolute;right:0;bottom:0}</style>
<div class="win"><cad-titlebar></cad-titlebar><cad-filetabs></cad-filetabs><cad-bars></cad-bars><cad-work></cad-work><cad-command></cad-command><cad-status></cad-status></div><cad-menu></cad-menu><cad-watermark></cad-watermark><cad-banner></cad-banner>`);
</script>
</body>
</html>
